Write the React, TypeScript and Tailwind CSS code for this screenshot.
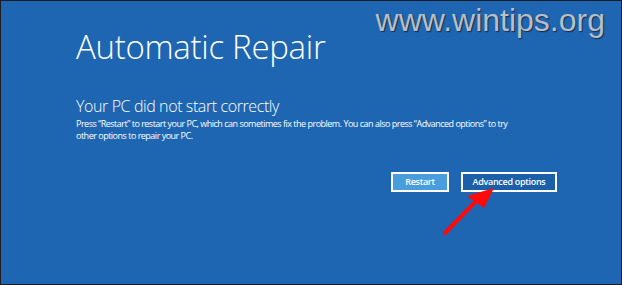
export default function App() {
  return (
    <div className="relative w-[622px] h-[285px] overflow-hidden border border-[#1c1c22] bg-[#1e66b2] text-white font-['Open_Sans',sans-serif]">
      {/* Watermark */}
      <div
        className="absolute right-[16px] top-[3px] text-[32px] leading-none text-[#b9bec6] font-['Liberation_Sans',Arial,sans-serif] [text-shadow:1px_1px_1px_rgba(20,30,50,0.8)]"
      >
        www.wintips.org
      </div>

      <div className="flex flex-col pl-[75px] pt-[26px] w-[556px]">
        <h1 className="text-[33px] leading-[40px] font-light tracking-[-0.3px]">Automatic Repair</h1>

        <h2 className="mt-[29px] text-[16px] leading-[20px] font-light tracking-[-0.4px]">
          Your PC did not start correctly
        </h2>
        <p className="mt-[2px] text-[9px] leading-[12px] tracking-[-0.5px]">
          Press “Restart” to restart your PC, which can sometimes fix the problem. You can also press “Advanced options” to try
          <br />
          other options to repair your PC.
        </p>

        <div className="flex justify-end gap-[12px] mt-[30px]">
          <button className="w-[58px] h-[20px] border-2 border-white bg-[#4a9ddd] text-[9px] font-semibold tracking-[-0.3px]">
            Restart
          </button>
          <button className="w-[96px] h-[20px] border-2 border-white bg-[#1c5fa9] text-[9px] font-semibold tracking-[-0.3px]">
            Advanced options
          </button>
        </div>
      </div>

      {/* Red annotation arrow */}
      <svg className="absolute left-0 top-0" width="622" height="285" viewBox="0 0 622 285">
        <line x1="444" y1="232" x2="478" y2="197" stroke="#ff0a0a" strokeWidth="4" strokeLinecap="round" />
        <polygon points="493,187 466,195 483,207" fill="#ff0a0a" />
      </svg>
    </div>
  );
}
